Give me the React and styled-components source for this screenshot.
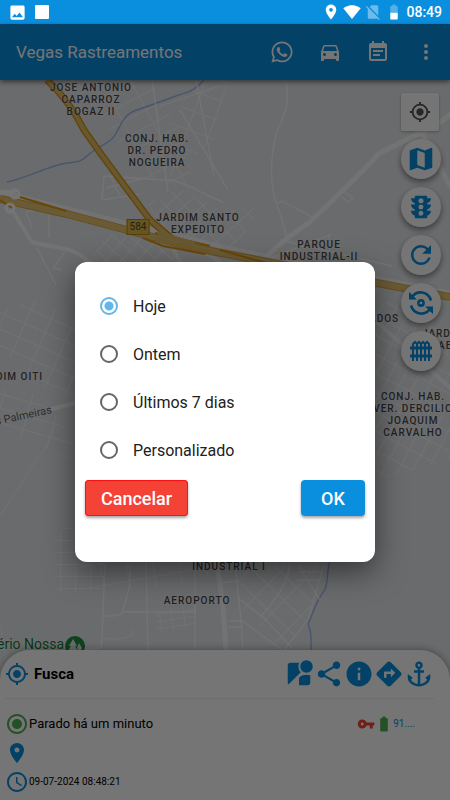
import React, { useState } from 'react'
import styled, { createGlobalStyle } from 'styled-components'
import {
  MdAnchor,
  MdBattery50,
  MdBatteryFull,
  MdDirections,
  MdDirectionsCar,
  MdEventNote,
  MdGpsFixed,
  MdImage,
  MdInfo,
  MdLocationOn,
  MdMap,
  MdMoreVert,
  MdNoSim,
  MdRadioButtonChecked,
  MdRefresh,
  MdSchedule,
  MdShare,
  MdSignalWifi4Bar,
  MdStreetview,
  MdTraffic,
  MdVpnKey,
} from 'react-icons/md'
import { FaWhatsapp } from 'react-icons/fa'

const BLUE = '#0a8fdf'

const GlobalStyle = createGlobalStyle`
  * {
    box-sizing: border-box;
  }
  body {
    margin: 0;
    font-family: Roboto, 'Liberation Sans', sans-serif;
    color: #000;
  }
  button {
    font-family: inherit;
    border: 0;
    padding: 0;
    cursor: pointer;
  }
`

const Screen = styled.div`
  display: flex;
  flex-direction: column;
  min-height: 100vh;
`

const StatusBar = styled.div`
  display: flex;
  align-items: center;
  height: 24px;
  padding: 0 8px;
  background: ${BLUE};
  color: #fff;
`

const Notifications = styled.div`
  display: flex;
  align-items: center;
  gap: 8px;
  margin-right: auto;
`

const Square = styled.span`
  width: 14px;
  height: 14px;
  border-radius: 1px;
  background: #fff;
`

const SystemIcons = styled.div`
  display: flex;
  align-items: center;
  gap: 3px;
`

const Faded = styled.span`
  display: flex;
  opacity: 0.4;
`

const Time = styled.span`
  font-size: 14px;
  font-weight: 500;
`

const Body = styled.div`
  position: relative;
  display: flex;
  flex-direction: column;
  flex: 1;
`

const Header = styled.header`
  display: flex;
  align-items: center;
  height: 56px;
  padding-left: 16px;
  background: ${BLUE};
  color: #fff;
  box-shadow: 0 2px 5px rgba(0, 0, 0, 0.5);
  z-index: 1;
`

const Title = styled.h1`
  flex: 1;
  margin: 0;
  font-size: 17px;
  font-weight: 400;
`

const HeaderButton = styled.button`
  display: flex;
  align-items: center;
  justify-content: center;
  width: 48px;
  height: 48px;
  background: none;
  color: #fff;
`

const MapArea = styled.main`
  position: relative;
  flex: 1;
  min-height: 300px;
  margin-bottom: -30px;
  overflow: hidden;
  background: #e8eaed;
`

const MapDrawing = styled.svg`
  display: block;
  position: absolute;
  width: 100%;
  height: 100%;
`

const Place = styled.span`
  position: absolute;
  left: ${({ $x }) => $x}px;
  top: ${({ $y }) => $y}px;
  transform: ${({ $start }) => ($start ? 'none' : 'translateX(-50%)')};
  color: #48494c;
  font-size: 10px;
  font-weight: 500;
  letter-spacing: 1px;
  line-height: 12px;
  text-align: center;
  white-space: pre;
  text-shadow: 0 0 2px #fff;
`

const Shield = styled(Place)`
  padding: 1px 2px;
  border: 1px solid #b98a12;
  background: #e0ba45;
  font-weight: 400;
  letter-spacing: 0;
  text-shadow: none;
`

const Street = styled(Place)`
  color: #606266;
  font-size: 11px;
  font-weight: 400;
  letter-spacing: 0;
  transform: rotate(-12deg);
`

const Park = styled(Place)`
  color: #137a33;
  font-size: 14px;
  font-weight: 400;
  letter-spacing: 0;
  line-height: 16px;
`

const MapTools = styled.div`
  position: absolute;
  top: 13px;
  right: 9px;
  display: flex;
  flex-direction: column;
  gap: 8px;
`

const LocateButton = styled.button`
  display: flex;
  align-items: center;
  justify-content: center;
  width: 38px;
  height: 38px;
  border-radius: 2px;
  background: #fff;
  color: #555;
  box-shadow: 0 1px 3px rgba(0, 0, 0, 0.3);
`

const RoundButton = styled.button`
  display: flex;
  align-items: center;
  justify-content: center;
  width: 40px;
  height: 40px;
  border-radius: 50%;
  background: #fff;
  color: ${BLUE};
  box-shadow: 0 3px 6px rgba(0, 0, 0, 0.45);
`

const Sheet = styled.section`
  position: relative;
  padding: 0 16px 4px 5px;
  border-radius: 30px 30px 0 0;
  background: #fff;
  box-shadow: 0 0 8px rgba(0, 0, 0, 0.4);
`

const SheetTop = styled.div`
  display: flex;
  align-items: center;
  height: 49px;
  margin-bottom: 10px;
  border-bottom: 1px solid #eee;
  color: ${BLUE};
`

const VehicleName = styled.h2`
  flex: 1;
  margin: 0 0 0 5px;
  color: #000;
  font-size: 15px;
  font-weight: 700;
`

const ActionButton = styled.button`
  display: flex;
  background: none;
  color: ${BLUE};
`

const InfoRow = styled.div`
  display: flex;
  align-items: center;
  height: 29px;
  color: ${({ $color }) => $color || BLUE};
`

const InfoText = styled.span`
  color: #000;
  font-size: ${({ $small }) => ($small ? 10 : 13)}px;
`

const Sensors = styled.div`
  display: flex;
  align-items: center;
  margin: 0 19px 0 auto;
  color: ${BLUE};
  font-size: 10px;
`

const Scrim = styled.div`
  position: absolute;
  inset: 0;
  z-index: 2;
  display: flex;
  align-items: center;
  justify-content: center;
  background: rgba(0, 0, 0, 0.54);
`

const Dialog = styled.form`
  width: 300px;
  min-height: 300px;
  padding: 20px 10px;
  border-radius: 12px;
  background: #fff;
  box-shadow: 0 10px 30px rgba(0, 0, 0, 0.5);
`

const Option = styled.label`
  display: flex;
  align-items: center;
  gap: 15px;
  height: 48px;
  padding-left: 15px;
  color: #212121;
  font-size: 16px;
  cursor: pointer;
`

const Radio = styled.input`
  appearance: none;
  width: 18px;
  height: 18px;
  margin: 0;
  border: 2px solid #666;
  border-radius: 50%;
  &:checked {
    border-color: #62b6ea;
    background: radial-gradient(circle, #62b6ea 4px, transparent 5px);
  }
`

const DialogActions = styled.div`
  display: flex;
  justify-content: space-between;
  padding-top: 6px;
`

const DialogButton = styled.button`
  min-width: 64px;
  height: 36px;
  padding: 0 16px;
  border-radius: 4px;
  background: ${({ $danger }) => ($danger ? '#f44336' : BLUE)};
  color: #fff;
  font-size: 18px;
  font-weight: 500;
  box-shadow:
    ${({ $danger }) => ($danger ? 'inset 0 0 0 1px #f11,' : '')}
    0 2px 3px rgba(0, 0, 0, 0.35);
`

const places = [
  { x: 91, y: 2, text: 'JOSE ANTONIO\nCAPARROZ\nBOGAZ II' },
  { x: 157, y: 53, text: 'CONJ. HAB.\nDR. PEDRO\nNOGUEIRA' },
  { x: 198, y: 132, text: 'JARDIM SANTO\nEXPEDITO' },
  { x: 319, y: 159, text: 'PARQUE\nINDUSTRIAL-II' },
  { x: 369, y: 233, text: 'ADOS', start: true },
  { x: 422, y: 248, text: 'JARDIM', start: true },
  { x: 438, y: 260, text: 'AB', start: true },
  { x: -4, y: 291, text: 'DIM OITI', start: true },
  { x: 413, y: 311, text: 'CONJ. HAB.\nVER. DERCILIO\nJOAQUIM\nCARVALHO' },
  { x: 229, y: 481, text: 'INDUSTRIAL I' },
  { x: 197, y: 515, text: 'AEROPORTO' },
]

const options = ['Hoje', 'Ontem', 'Últimos 7 dias', 'Personalizado']

// blocks of small streets, each filled with a tilted grid
const blocks = [
  { id: 'a', angle: 62, w: 15, h: 26, points: '52,80 152,80 178,128 195,190 145,178 110,130 84,98' },
  { id: 'b', angle: 20, w: 22, h: 19, points: '162,134 200,80 228,80 215,140 164,180' },
  { id: 'c', angle: 48, w: 12, h: 14, points: '148,204 180,188 225,212 262,206 240,240 228,248 160,232' },
  { id: 'd', angle: 42, w: 12, h: 11, points: '90,262 106,234 150,240 182,262' },
  { id: 'e', angle: 24, w: 22, h: 15, points: '0,350 0,310 40,300 75,320 75,400 50,390' },
  { id: 'f', angle: 16, w: 28, h: 14, points: '0,388 40,396 74,440 68,458 0,430' },
  { id: 'g', angle: 0, w: 15, h: 12, points: '54,535 75,520 104,562 104,592 58,592' },
  { id: 'h', angle: 28, w: 13, h: 17, points: '374,310 405,290 450,340 450,460 374,480' },
  { id: 'i', angle: -8, w: 12, h: 7, points: '155,612 196,604 196,625 157,633' },
  { id: 'j', angle: 44, w: 23, h: 18, points: '236,565 322,565 308,620 284,650 236,600' },
  { id: 'k', angle: -10, w: 26, h: 22, points: '80,562 224,562 222,576 150,590 80,588' },
]

function CityMap() {
  return (
    <MapDrawing viewBox="0 80 450 600" preserveAspectRatio="xMinYMin slice" fill="none" aria-hidden="true">
      <defs>
        {blocks.map((b) => (
          <pattern
            key={b.id}
            id={`block-${b.id}`}
            width={b.w}
            height={b.h}
            patternUnits="userSpaceOnUse"
            patternTransform={`rotate(${b.angle})`}
          >
            <path d={`M0 0H${b.w}M0 0V${b.h}`} stroke="#fff" strokeWidth="2" />
          </pattern>
        ))}
      </defs>
      <g opacity="0.65">
        {blocks.map((b) => (
          <polygon key={b.id} points={b.points} fill={`url(#block-${b.id})`} />
        ))}
      </g>

      <g stroke="#9db9ef" strokeWidth="1.4">
        <path d="M204 80C192 94 184 92 168 99L140 109C123 113 121 126 115 135C110 144 101 144 88 155C78 166 72 160 58 165C38 171 22 179 7 182" />
        <path d="M330 560C326 574 329 584 324 591C315 603 315 609 308 624C312 632 311 640 311 655" />
      </g>

      <g stroke="#fff" strokeWidth="1.3" opacity="0.85">
        <path d="M286 80C290 104 286 112 277 131C270 158 270 178 275 200C280 213 284 225 287 238" />
        <path d="M152 80L168 192M160 106L220 86M196 80L214 176M180 110L228 190" />
        <path d="M164 180L104 176L102 200L140 194M110 175L120 196M106 188L145 178M164 180C178 178 190 188 225 203" />
        <path d="M32 228C30 214 18 210 34 211M49 213V238M37 248L56 285M65 252L53 268L62 270" />
        <path d="M276 204L282 201L312 217M260 262L330 235L322 250M280 240L392 266M345 192L353 198L348 202L342 197" />
        <path d="M146 562L148 650M105 562L102 638L101 648L80 650M130 565C132 590 124 602 123 612C121 616 112 616 104 616M123 612H195M195 562V650" />
        <path d="M235 564L241 620L243 650M241 620L282 650M229 621H243M228 627H243M222 583L236 581M238 598L264 618L292 648" />
        <path d="M298 565L320 600M289 566C289 585 270 605 260 618M324 565L308 620L284 650M298 572H323M296 580H320" />
        <path d="M104 638C120 641 140 636 132 628M0 622L6 660M0 516L30 470L50 440" opacity="0.5" />
      </g>

      <g stroke="#fff" strokeLinecap="round">
        <path d="M450 186L414 118M450 114C440 126 412 136 378 154C368 168 332 200 310 222C298 230 275 246 262 262" strokeWidth="5" opacity="0.75" />
        <path d="M0 192H14M10 207L32 242C52 248 70 246 84 258L96 268" strokeWidth="4" opacity="0.8" />
        <path d="M52 409L75 403" strokeWidth="4" />
        <path d="M216 562C223 594 224 620 226 652" strokeWidth="5" opacity="0.8" />
        <path d="M0 195L230 252L450 296" strokeWidth="11" opacity="0.7" />
        <path d="M163 230L180 262M205 252L222 264M375 320L450 388" strokeWidth="4" opacity="0.7" />
      </g>

      <g strokeLinejoin="round">
        <path d="M47 80C60 92 73 108 84 130L101 154L150 220L176 242" stroke="#d9951a" strokeWidth="7" />
        <path d="M47 80C60 92 73 108 84 130L101 154L150 220L176 242" stroke="#e3bf66" strokeWidth="4" />
        <path d="M0 199L67 214L127 230L190 247L450 297" stroke="#d9a94a" strokeWidth="8" />
        <path d="M0 199L67 214L127 230L190 247L450 297" stroke="#e6c673" strokeWidth="6" />
        <path d="M0 200L12 208M20 197L66 211M143 238L163 246L205 254M155 233L210 246M220 250L266 263" stroke="#e8960a" strokeWidth="2" />
        <path d="M155 239L210 252M158 233L195 244" stroke="#e3bf66" strokeWidth="4" />
      </g>

      <circle cx="10" cy="208" r="4" stroke="#fff" strokeWidth="3" />
      <circle cx="15" cy="194" r="4" stroke="#fff" strokeWidth="3" />
      <circle cx="75" cy="646" r="10" fill="#20913e" />
      <path d="M73 639L69 646H71L68 651H72V656H74V651H78L75 646H77Z" fill="#e8eaed" />
      <path d="M79 643L77 648L79 652V656H80V652L82 648Z" fill="#e8eaed" />
    </MapDrawing>
  )
}

function RotateIcon() {
  return (
    <svg width="26" height="26" viewBox="0 0 26 26" fill="none" stroke="currentColor" strokeWidth="2.6">
      <circle cx="13" cy="13" r="2.6" />
      <path d="M4 7C9 0 20 1 23 10.5M22 19C17 26 6 25 3 15.5" />
      <path d="M1 2V9.5H9ZM25 24V16.5H17Z" fill="currentColor" stroke="none" />
    </svg>
  )
}

function FenceIcon() {
  return (
    <svg width="24" height="24" viewBox="0 0 24 24" fill="none" stroke="currentColor" strokeWidth="2">
      <path d="M1 9H23M1 17H23" strokeWidth="3" />
      <path d="M4 22V5L6 3L8 5V22M8 5L10 3L12 5V22M12 5L14 3L16 5V22M16 5L18 3L20 5V22" />
    </svg>
  )
}

function VehicleSheet() {
  return (
    <Sheet>
      <SheetTop>
        <MdGpsFixed size={24} />
        <VehicleName>Fusca</VehicleName>
        <ActionButton aria-label="Street view"><MdStreetview size={30} /></ActionButton>
        <ActionButton aria-label="Compartilhar"><MdShare size={30} /></ActionButton>
        <ActionButton aria-label="Informações"><MdInfo size={30} /></ActionButton>
        <ActionButton aria-label="Rotas"><MdDirections size={30} /></ActionButton>
        <ActionButton aria-label="Âncora"><MdAnchor size={30} /></ActionButton>
      </SheetTop>
      <InfoRow $color="#4caf50">
        <MdRadioButtonChecked size={24} />
        <InfoText>Parado há um minuto</InfoText>
        <Sensors>
          <MdVpnKey size={18} color="#f44336" />
          <MdBatteryFull size={18} color="#4caf50" />
          <span>91....</span>
        </Sensors>
      </InfoRow>
      <InfoRow>
        <MdLocationOn size={24} />
      </InfoRow>
      <InfoRow>
        <MdSchedule size={24} />
        <InfoText $small>09-07-2024 08:48:21</InfoText>
      </InfoRow>
    </Sheet>
  )
}

function PeriodDialog() {
  const [period, setPeriod] = useState('Hoje')

  return (
    <Scrim>
      <Dialog role="dialog" aria-label="Período" onSubmit={(e) => e.preventDefault()}>
        {options.map((it) => (
          <Option key={it}>
            <Radio
              type="radio"
              name="period"
              value={it}
              checked={period === it}
              onChange={() => setPeriod(it)}
            />
            {it}
          </Option>
        ))}
        <DialogActions>
          <DialogButton type="button" $danger>Cancelar</DialogButton>
          <DialogButton type="submit">OK</DialogButton>
        </DialogActions>
      </Dialog>
    </Scrim>
  )
}

function App() {
  return (
    <Screen>
      <GlobalStyle />
      <StatusBar>
        <Notifications>
          <MdImage size={19} />
          <Square />
        </Notifications>
        <SystemIcons>
          <MdLocationOn size={18} />
          <MdSignalWifi4Bar size={18} />
          <Faded><MdNoSim size={18} /></Faded>
          <MdBattery50 size={18} />
          <Time>08:49</Time>
        </SystemIcons>
      </StatusBar>
      <Body>
        <Header>
          <Title>Vegas Rastreamentos</Title>
          <HeaderButton aria-label="WhatsApp"><FaWhatsapp size={24} /></HeaderButton>
          <HeaderButton aria-label="Veículos"><MdDirectionsCar size={24} /></HeaderButton>
          <HeaderButton aria-label="Eventos"><MdEventNote size={24} /></HeaderButton>
          <HeaderButton aria-label="Mais"><MdMoreVert size={24} /></HeaderButton>
        </Header>
        <MapArea>
          <CityMap />
          {places.map((it) => (
            <Place key={it.text} $x={it.x} $y={it.y} $start={it.start}>
              {it.text}
            </Place>
          ))}
          <Shield $x={138} $y={139}>584</Shield>
          <Street $x={-5} $y={330} $start>s Palmeiras</Street>
          <Park $x={-3} $y={556} $start>ério Nossa</Park>
          <MapTools>
            <LocateButton aria-label="Minha localização"><MdGpsFixed size={22} /></LocateButton>
            <RoundButton aria-label="Mapa"><MdMap size={30} /></RoundButton>
            <RoundButton aria-label="Trânsito"><MdTraffic size={30} /></RoundButton>
            <RoundButton aria-label="Atualizar"><MdRefresh size={30} /></RoundButton>
            <RoundButton aria-label="Girar"><RotateIcon /></RoundButton>
            <RoundButton aria-label="Cerca"><FenceIcon /></RoundButton>
          </MapTools>
        </MapArea>
        <VehicleSheet />
        <PeriodDialog />
      </Body>
    </Screen>
  )
}

export default App
